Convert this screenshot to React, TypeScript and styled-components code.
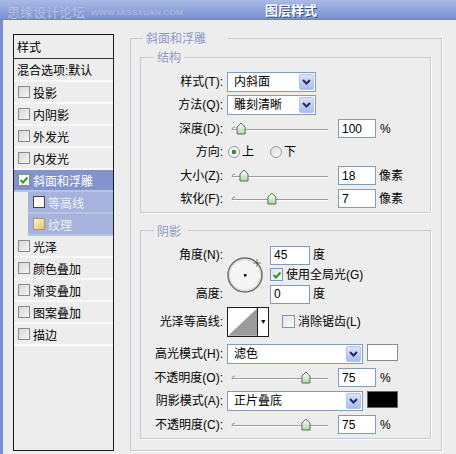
import React from 'react';
import styled, { createGlobalStyle } from 'styled-components';

const GlobalStyle = createGlobalStyle`
  html, body {
    margin: 0;
    padding: 0;
    background: #ededed;
  }
  body {
    font-family: "Liberation Sans", "Noto Sans CJK SC", sans-serif;
    font-size: 12px;
    color: #000;
  }
`;

const Window = styled.div`
  width: 456px;
  height: 454px;
  display: flex;
  flex-direction: column;
  overflow: hidden;
  background: #ededed;
`;

const TitleBar = styled.div`
  height: 20px;
  flex: none;
  box-sizing: border-box;
  display: flex;
  align-items: center;
  padding-left: 7px;
  background: linear-gradient(#aabae6, #8fa3dc 55%, #7a90d3);
  border-bottom: 1px solid #6c82c8;
`;

const Watermark = styled.span`
  font-family: "Noto Sans CJK SC", sans-serif;
  font-size: 13px;
  line-height: 16px;
  color: #b7bfd9;
  margin-top: 4px;
`;

const WatermarkUrl = styled.span`
  font-family: "Liberation Sans", sans-serif;
  font-size: 8px;
  color: #b7bfd9;
  margin: 6px 0 0 6px;
  letter-spacing: 0.3px;
`;

const Title = styled.span`
  margin-left: 82px;
  font-family: "Noto Sans CJK SC", sans-serif;
  font-weight: 700;
  font-size: 13px;
  color: #fff;
  text-shadow: 1px 1px 0 #3a4a80;
`;

const Body = styled.div`
  flex: 1;
  display: flex;
  align-items: flex-start;
  border-left: 3px solid #7b8dd3;
  padding: 11px 0 0 10px;
`;

/* ---------- left style list ---------- */

const StyleList = styled.div`
  width: 101px;
  height: 417px;
  margin-top: 3px;
  flex: none;
  box-sizing: border-box;
  border: 1px solid #1a1a1a;
  background: #ededed;
  display: flex;
  flex-direction: column;
`;

const ListHeader = styled.div<{ $dark?: boolean }>`
  height: ${(p) => (p.$dark ? 24 : 23)}px;
  box-sizing: border-box;
  padding-left: 3px;
  display: flex;
  align-items: center;
  border-bottom: ${(p) => (p.$dark ? '1px solid #333' : '2px solid #f8f8f8')};
`;

type ItemState = 'none' | 'selected' | 'sub';

const ListItem = styled.div<{ $state: ItemState }>`
  height: 22px;
  box-sizing: border-box;
  display: flex;
  align-items: center;
  margin-left: ${(p) => (p.$state === 'sub' ? 14 : 0)}px;
  padding-left: ${(p) => (p.$state === 'sub' ? 5 : 4)}px;
  border-bottom: 2px solid ${(p) => (p.$state === 'none' ? '#f8f8f8' : '#b9c3e3')};
  background: ${(p) =>
    p.$state === 'selected' ? '#8294cb' : p.$state === 'sub' ? '#a7b3dc' : 'transparent'};
  color: ${(p) => (p.$state === 'none' ? '#000' : p.$state === 'selected' ? '#fff' : '#eef0f6')};
`;

type CheckKind = 'off' | 'on' | 'white' | 'yellow';

const ListCheck = styled.span<{ $kind: CheckKind }>`
  width: 12px;
  height: 12px;
  flex: none;
  box-sizing: border-box;
  margin-right: 3px;
  display: flex;
  align-items: center;
  justify-content: center;
  border: 1px solid ${(p) => (p.$kind === 'white' ? '#444' : p.$kind === 'yellow' ? '#a89868' : '#8a8a8a')};
  background: ${(p) =>
    p.$kind === 'off'
      ? 'linear-gradient(135deg, #d6d6d6, #f6f6f6)'
      : p.$kind === 'yellow'
        ? 'linear-gradient(135deg, #fbf2c8, #e6c676)'
        : '#fff'};
`;

/* ---------- group boxes ---------- */

const Group = styled.fieldset<{ $mt?: number; $pad: string }>`
  margin: ${(p) => p.$mt ?? 0}px 0 0 0;
  min-width: 0;
  box-sizing: border-box;
  border: 1px solid #c6cad4;
  box-shadow: 1px 1px 0 #fff;
  padding: ${(p) => p.$pad};
`;

const OuterGroup = styled(Group)`
  margin-left: 16px;
  width: 312px;
  height: 420px;
  flex: none;
`;

const Legend = styled.legend<{ $ml: number; $pr: number }>`
  margin-left: ${(p) => p.$ml}px;
  padding: 0 ${(p) => p.$pr}px 0 3px;
  color: #8d9bc5;
  font-family: "Noto Sans CJK SC", sans-serif;
  font-size: 12px;
  line-height: 14px;
`;

/* ---------- form rows ---------- */

const Row = styled.div<{ $h: number; $mt?: number }>`
  display: grid;
  grid-template-columns: 82px 1fr;
  column-gap: 4px;
  align-items: center;
  height: ${(p) => p.$h}px;
  margin-top: ${(p) => p.$mt ?? 0}px;
`;

const Label = styled.span`
  text-align: right;
  white-space: nowrap;
  line-height: 14px;
`;

const Controls = styled.div`
  display: flex;
  align-items: center;
  height: 100%;
`;

const SelectBox = styled.div<{ $w: number }>`
  width: ${(p) => p.$w}px;
  height: 20px;
  box-sizing: border-box;
  border: 1px solid #7f9db9;
  background: #fff;
  display: flex;
  align-items: center;
  padding-left: 6px;
  flex: none;
`;

const SelectText = styled.span`
  flex: 1;
  line-height: 14px;
`;

const DropButton = styled.span`
  width: 15px;
  height: 16px;
  margin-right: 1px;
  box-sizing: border-box;
  border: 1px solid #b3c2ec;
  border-radius: 2px;
  background: linear-gradient(#dbe4fb, #a9bcee);
  display: flex;
  align-items: center;
  justify-content: center;
`;

const NumInput = styled.input<{ $w: number; $ml: number }>`
  width: ${(p) => p.$w}px;
  height: 19px;
  box-sizing: border-box;
  margin: 0 0 0 ${(p) => p.$ml}px;
  border: 1px solid #7f9db9;
  background: #fff;
  padding: 0 0 0 3px;
  font: inherit;
  font-size: 12px;
  color: #000;
  outline: none;
  flex: none;
`;

const Unit = styled.span<{ $ml?: number }>`
  margin-left: ${(p) => p.$ml ?? 4}px;
  line-height: 14px;
  white-space: nowrap;
`;

const RadioDot = styled.span<{ $on?: boolean; $ml: number }>`
  width: 12px;
  height: 12px;
  box-sizing: border-box;
  margin-left: ${(p) => p.$ml}px;
  border: 1px solid #8a9ab0;
  border-radius: 50%;
  background: ${(p) =>
    p.$on
      ? 'radial-gradient(circle, #2e8a2e 0 2px, #f4f4f4 2.5px)'
      : 'linear-gradient(135deg, #dcdcdc, #fafafa)'};
  flex: none;
`;

const RadioText = styled.span`
  margin-left: 2px;
  line-height: 14px;
`;

const FormCheck = styled.span<{ $ml?: number }>`
  width: 13px;
  height: 13px;
  box-sizing: border-box;
  margin-left: ${(p) => p.$ml ?? 0}px;
  border: 1px solid #7f95b0;
  background: linear-gradient(135deg, #dfe3ea, #fbfbfb);
  display: flex;
  align-items: center;
  justify-content: center;
  flex: none;
`;

const CheckText = styled.span`
  margin-left: 3px;
  line-height: 14px;
  white-space: nowrap;
`;

const AngleBlock = styled.div`
  display: grid;
  grid-template-columns: 82px 36px auto;
  grid-template-rows: 19px 1fr 19px;
  column-gap: 4px;
  align-items: center;
  height: 58px;
`;

const AngleDial = styled.div`
  grid-column: 2;
  grid-row: 1 / 4;
  width: 36px;
  height: 36px;
`;

const RightCell = styled.div`
  grid-column: 3;
  display: flex;
  align-items: center;
  margin-left: 3px;
`;

const ContourBox = styled.div`
  width: 42px;
  height: 30px;
  box-sizing: border-box;
  border: 1px solid #1e1e1e;
  background: #fff;
  display: flex;
  flex: none;
`;

const ContourArrow = styled.div`
  width: 10px;
  border-left: 1px solid #1e1e1e;
  display: flex;
  align-items: center;
  justify-content: center;
  font-size: 7px;
  line-height: 8px;
`;

const Swatch = styled.span<{ $color: string }>`
  width: 31px;
  height: 17px;
  box-sizing: border-box;
  margin-left: 4px;
  border: 1px solid ${(p) => (p.$color === '#000' ? '#666' : '#8a8a8a')};
  background: ${(p) => p.$color};
  align-self: flex-start;
  flex: none;
`;

/* ---------- drawings ---------- */

const Chevron = () => (
  <svg width="11" height="8" viewBox="0 0 11 8">
    <path d="M2 2 L5.5 5.5 L9 2" fill="none" stroke="#1d2c5c" strokeWidth="2" />
  </svg>
);

const GreenTick = () => (
  <svg width="10" height="10" viewBox="0 0 10 10">
    <path d="M1.5 5 L4 7.5 L8.5 2.5" fill="none" stroke="#22a022" strokeWidth="2" />
  </svg>
);

const Slider = ({ pct }: { pct: number }) => {
  const x = 5 + pct * 96;
  return (
    <svg width="101" height="14" viewBox="0 0 101 14" style={{ flex: 'none' }}>
      <path d="M8 5 Q5 5 5 7.5" fill="none" stroke="#9a9a9a" />
      <line x1="5" y1="7.5" x2="101" y2="7.5" stroke="#9a9a9a" />
      <line x1="6" y1="8.5" x2="101" y2="8.5" stroke="#ffffff" />
      <defs>
        <linearGradient id="thumb" x1="0" y1="0" x2="0" y2="1">
          <stop offset="0" stopColor="#ffffff" />
          <stop offset="1" stopColor="#a9dca9" />
        </linearGradient>
      </defs>
      <path
        d={`M${x - 4} 5 L${x} 1 L${x + 4} 5 V12 H${x - 4} Z`}
        fill="url(#thumb)"
        stroke="#5b6b5b"
        strokeWidth="1"
      />
    </svg>
  );
};

const Dial = () => (
  <svg width="36" height="36" viewBox="0 0 36 36" style={{ overflow: 'visible' }}>
    <circle cx="18" cy="18" r="17" fill="#f5f5f5" stroke="#6e6e6e" strokeWidth="1.5" />
    <circle cx="18" cy="18" r="15.5" fill="none" stroke="#d8d8d8" strokeWidth="1" />
    <rect x="17" y="17" width="2.5" height="2.5" fill="#000" />
    <path d="M30 2.5 V9.5 M26.5 6 H33.5" stroke="#222" strokeWidth="1" strokeDasharray="1 1" />
  </svg>
);

const ContourCurve = () => (
  <svg width="30" height="28" viewBox="0 0 30 28">
    <polygon points="0,28 30,0 30,28" fill="#9c9c9c" />
  </svg>
);

/* ---------- data ---------- */

const listItems: { text: string; state: ItemState; check: CheckKind }[] = [
  { text: '投影', state: 'none', check: 'off' },
  { text: '内阴影', state: 'none', check: 'off' },
  { text: '外发光', state: 'none', check: 'off' },
  { text: '内发光', state: 'none', check: 'off' },
  { text: '斜面和浮雕', state: 'selected', check: 'on' },
  { text: '等高线', state: 'sub', check: 'white' },
  { text: '纹理', state: 'sub', check: 'yellow' },
  { text: '光泽', state: 'none', check: 'off' },
  { text: '颜色叠加', state: 'none', check: 'off' },
  { text: '渐变叠加', state: 'none', check: 'off' },
  { text: '图案叠加', state: 'none', check: 'off' },
  { text: '描边', state: 'none', check: 'off' },
];

const Select = ({ w, text }: { w: number; text: string }) => (
  <SelectBox $w={w}>
    <SelectText>{text}</SelectText>
    <DropButton>
      <Chevron />
    </DropButton>
  </SelectBox>
);

const SliderField = ({ pct, value, unit }: { pct: number; value: string; unit: string }) => (
  <Controls>
    <Slider pct={pct} />
    <NumInput $w={38} $ml={10} readOnly value={value} />
    <Unit $ml={unit === '%' ? 4 : 3}>{unit}</Unit>
  </Controls>
);

export default function App() {
  return (
    <>
      <GlobalStyle />
      <Window>
        <TitleBar>
          <Watermark>思缘设计论坛</Watermark>
          <WatermarkUrl>WWW.MISSYUAN.COM</WatermarkUrl>
          <Title>图层样式</Title>
        </TitleBar>
        <Body>
          <StyleList>
            <ListHeader $dark>样式</ListHeader>
            <ListHeader>混合选项:默认</ListHeader>
            {listItems.map((it) => (
              <ListItem key={it.text} $state={it.state}>
                <ListCheck $kind={it.check}>{it.check === 'on' && <GreenTick />}</ListCheck>
                {it.text}
              </ListItem>
            ))}
          </StyleList>

          <OuterGroup $pad="0 10px 0 9px">
            <Legend $ml={3} $pr={22}>斜面和浮雕</Legend>

            <Group $mt={5} $pad="8px 0 3px 0">
              <Legend $ml={13} $pr={3}>结构</Legend>
              <Row $h={20}>
                <Label>样式(T):</Label>
                <Controls>
                  <Select w={89} text="内斜面" />
                </Controls>
              </Row>
              <Row $h={20} $mt={3.4}>
                <Label>方法(Q):</Label>
                <Controls>
                  <Select w={89} text="雕刻清晰" />
                </Controls>
              </Row>
              <Row $h={20} $mt={3.4}>
                <Label>深度(D):</Label>
                <SliderField pct={0.095} value="100" unit="%" />
              </Row>
              <Row $h={20} $mt={3.4}>
                <Label>方向:</Label>
                <Controls>
                  <RadioDot $on $ml={1} />
                  <RadioText>上</RadioText>
                  <RadioDot $ml={16} />
                  <RadioText>下</RadioText>
                </Controls>
              </Row>
              <Row $h={20} $mt={3.4}>
                <Label>大小(Z):</Label>
                <SliderField pct={0.125} value="18" unit="像素" />
              </Row>
              <Row $h={20} $mt={3.4}>
                <Label>软化(F):</Label>
                <SliderField pct={0.415} value="7" unit="像素" />
              </Row>
            </Group>

            <Group $mt={11} $pad="8px 0 3px 0">
              <Legend $ml={13} $pr={7}>阴影</Legend>
              <AngleBlock>
                <Label>角度(N):</Label>
                <AngleDial>
                  <Dial />
                </AngleDial>
                <RightCell>
                  <NumInput $w={40} $ml={0} readOnly value="45" />
                  <Unit $ml={3}>度</Unit>
                </RightCell>
                <RightCell>
                  <FormCheck>
                    <GreenTick />
                  </FormCheck>
                  <CheckText>使用全局光(G)</CheckText>
                </RightCell>
                <Label>高度:</Label>
                <RightCell>
                  <NumInput $w={40} $ml={0} readOnly value="0" />
                  <Unit $ml={3}>度</Unit>
                </RightCell>
              </AngleBlock>
              <Row $h={30} $mt={3}>
                <Label>光泽等高线:</Label>
                <Controls>
                  <ContourBox>
                    <ContourCurve />
                    <ContourArrow>▼</ContourArrow>
                  </ContourBox>
                  <FormCheck $ml={13} />
                  <CheckText>消除锯齿(L)</CheckText>
                </Controls>
              </Row>
              <Row $h={21} $mt={7}>
                <Label>高光模式(H):</Label>
                <Controls>
                  <Select w={136} text="滤色" />
                  <Swatch $color="#fff" />
                </Controls>
              </Row>
              <Row $h={21} $mt={2.5}>
                <Label>不透明度(O):</Label>
                <SliderField pct={0.77} value="75" unit="%" />
              </Row>
              <Row $h={21} $mt={2.5}>
                <Label>阴影模式(A):</Label>
                <Controls>
                  <Select w={136} text="正片叠底" />
                  <Swatch $color="#000" />
                </Controls>
              </Row>
              <Row $h={21} $mt={2.5}>
                <Label>不透明度(C):</Label>
                <SliderField pct={0.77} value="75" unit="%" />
              </Row>
            </Group>
          </OuterGroup>
        </Body>
      </Window>
    </>
  );
}
